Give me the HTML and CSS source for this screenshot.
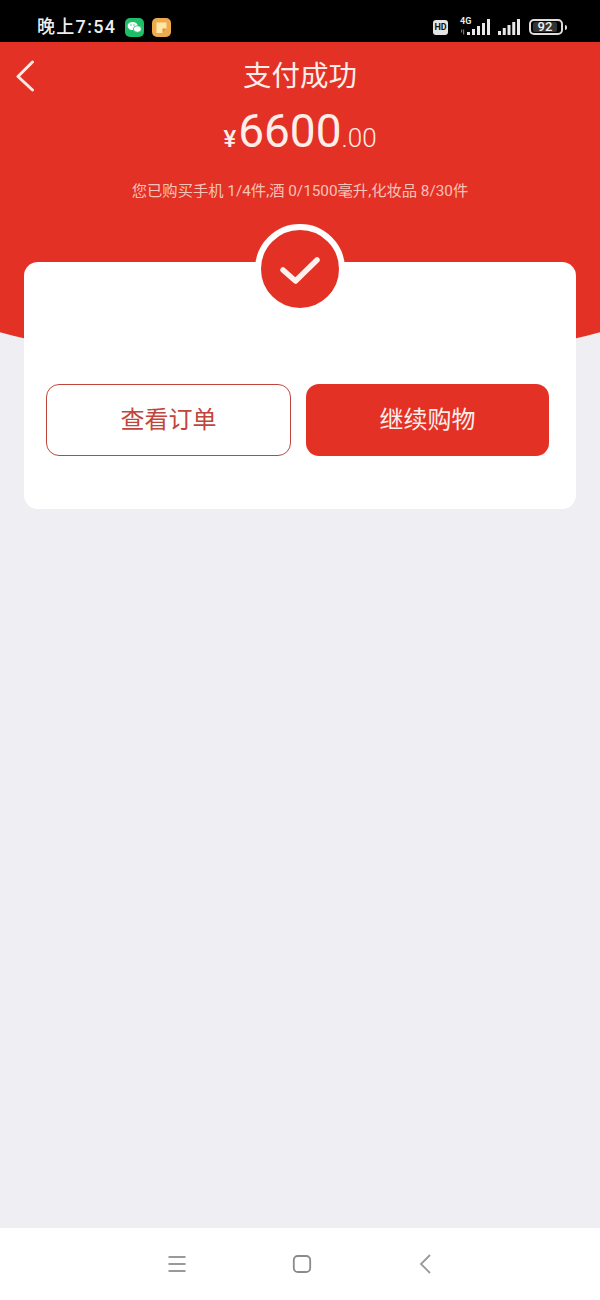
FILE: index.html
```html
<!DOCTYPE html>
<html lang="zh-CN">
<head>
<meta charset="utf-8">
<title>支付成功</title>
<link rel="stylesheet" href="styles.css">
</head>
<body>
<div class="screen">
  <div class="status">
    <div class="status-left">
      <span class="time">晚上7:54</span>
      <svg class="app-icon" viewBox="0 0 19 19"><rect width="19" height="19" rx="5" fill="#1fbe6a"/><ellipse cx="7.600" cy="8" rx="5" ry="4.100" fill="#fff"/><ellipse cx="12.400" cy="11" rx="4" ry="3.300" fill="#fff" stroke="#1fbe6a" stroke-width=".8"/><circle cx="6" cy="7" r=".7" fill="#1fbe6a"/><circle cx="9" cy="7" r=".7" fill="#1fbe6a"/></svg>
      <svg class="app-icon" viewBox="0 0 19 19"><rect width="19" height="19" rx="5" fill="#eeaa4c"/><path d="M4.500 4.500h10v6l-4 4.500h-6z" fill="#fde6a8"/><path d="M10.500 15v-4.500h4z" fill="#d9932f"/></svg>
    </div>
    <div class="status-right">
      <span class="hd">HD</span>
      <div class="net">
        <span class="net-label">4G</span>
        <svg class="signal-a" viewBox="0 0 30 18"><path d="M1 11.500h1.200v3H1zM3 11.500h1.200v5H3z" fill="#777"/><path d="M7 14h3v3H7zM12 11h3v6h-3zM17 8h3v9h-3zM22 5h3v12h-3zM27 1h3v16h-3z" fill="#e8e8e8"/></svg>
      </div>
      <svg class="signal" viewBox="0 0 22 16"><path d="M0 12h3v4H0zM4.750 9h3v7h-3zM9.500 6h3v10h-3zM14.250 3h3v13h-3zM19 0h3v16h-3z" fill="#e8e8e8"/></svg>
      <div class="battery"><span class="battery-fill">92</span></div>
      <span class="battery-nub"></span>
    </div>
  </div>

  <main class="content">
    <section class="hero">
      <header class="nav">
        <svg class="back" viewBox="0 0 20 32"><path d="M17.500 2 3 16.500 17.500 30" fill="none" stroke="#fbe9e4" stroke-width="3" stroke-linecap="round" stroke-linejoin="round"/></svg>
        <h1 class="title">支付成功</h1>
      </header>
      <p class="amount"><span class="yen">¥</span><span class="whole">6600</span><span class="cents">.00</span></p>
      <p class="quota">您已购买手机 1/4件,酒 0/1500毫升,化妆品 8/30件</p>
    </section>

    <section class="card">
      <div class="badge">
        <svg class="check" viewBox="0 0 40 30"><path d="M3 16 15.500 27 37 6" fill="none" stroke="#fdf1ee" stroke-width="5.500" stroke-linecap="round" stroke-linejoin="round"/></svg>
      </div>
      <div class="actions">
        <button class="btn btn-outline">查看订单</button>
        <button class="btn btn-solid">继续购物</button>
      </div>
    </section>
  </main>

  <nav class="softkeys">
    <svg class="key" viewBox="0 0 20 20"><path d="M1.500 3h17M1.500 10h17M1.500 17h17" fill="none" stroke="#999" stroke-width="1.800"/></svg>
    <svg class="key" viewBox="0 0 20 20"><rect x="1.800" y="2" width="16.400" height="16" rx="4" fill="none" stroke="#8a8a8a" stroke-width="1.800"/></svg>
    <svg class="key" viewBox="0 0 20 20"><path d="M14 1 5 10l9 9" fill="none" stroke="#999" stroke-width="1.800"/></svg>
  </nav>
</div>
</body>
</html>
```
FILE: styles.css
```css
* { box-sizing: border-box; }
html, body { margin: 0; padding: 0; }
body { font-family: Roboto, "Noto Sans CJK SC", sans-serif; background: #eeeef3; }

.screen { width: 600px; height: 1300px; display: flex; flex-direction: column; overflow: hidden; }

.status { height: 42px; background: #000; display: flex; justify-content: space-between; align-items: center; padding: 12px 33px 0 37px; flex: none; }
.status-left { display: flex; align-items: center; gap: 8px; }
.time { font-size: 18px; font-weight: 500; color: #eee; letter-spacing: 1.300px; line-height: 20px; margin-right: 1px; }
.app-icon { width: 19px; height: 19px; display: block; }
.status-right { display: flex; align-items: center; }
.hd { width: 15px; height: 15px; border-radius: 3px; background: #e4e4e4; color: #111; font-size: 9px; font-weight: 700; line-height: 15px; text-align: center; margin-right: 12px; }
.net { position: relative; width: 30px; height: 18px; margin-right: 8px; }
.net-label { position: absolute; left: 0; top: -1px; color: #e8e8e8; font-size: 9px; font-weight: 700; line-height: 9px; }
.signal-a { display: block; width: 30px; height: 18px; }
.signal { display: block; width: 22px; height: 16px; margin-right: 9px; }
.battery { width: 34px; height: 16px; border: 2px solid #ddd; border-radius: 5px; padding: 1px 4px 1px 2px; }
.battery-fill { display: block; height: 10px; background: #333; border-radius: 2px; color: #eee; font-size: 13px; font-weight: 500; line-height: 10px; text-align: center; }
.battery-nub { width: 2px; height: 5px; background: #ddd; border-radius: 0 2px 2px 0; margin-left: 2px; }

.content { flex: 1; }

.hero { height: 329px; background: #e43126; clip-path: circle(1180px at 50% calc(100% - 1180px)); padding-top: 15px; text-align: center; color: #fff; }
.nav { position: relative; height: 40px; display: flex; align-items: center; justify-content: center; }
.back { position: absolute; left: 15px; top: 3px; width: 20px; height: 32px; }
.title { margin: 0; font-size: 28.500px; font-weight: 400; line-height: 40px; color: #fbeeea; }
.amount { margin: 3px 0 0; height: 62px; line-height: 62px; color: #fdeee9; display: flex; align-items: baseline; justify-content: center; }
.yen { font-size: 24px; font-weight: 500; margin-right: 2px; }
.whole { font-size: 46px; }
.cents { font-size: 26px; font-weight: 300; }
.quota { margin: 17px 0 0; font-size: 15.300px; line-height: 24px; color: #f6c3b8; }

.card { position: relative; width: 552px; height: 247px; margin: -109px 0 0 24px; padding: 122px 27px 0 22px; background: #fff; border-radius: 14px; }
.badge { position: absolute; left: 231px; top: -38px; width: 90px; height: 90px; border-radius: 50%; background: #e43126; border: 6px solid #fff; display: flex; align-items: center; justify-content: center; }
.check { width: 40px; height: 30px; display: block; }
.actions { display: flex; gap: 15px; }
.btn { flex: 1; height: 72px; border-radius: 13px; font: inherit; font-size: 24px; padding: 0 0 5px; }
.btn-outline { background: #fff; border: 1px solid #c0453c; color: #c0453c; }
.btn-solid { background: #e43126; border: 0; color: #fbeeea; }

.softkeys { flex: none; height: 72px; background: #fff; display: flex; justify-content: space-between; align-items: center; padding: 0 164px 0 167px; }
.key { width: 20px; height: 20px; display: block; }
```
